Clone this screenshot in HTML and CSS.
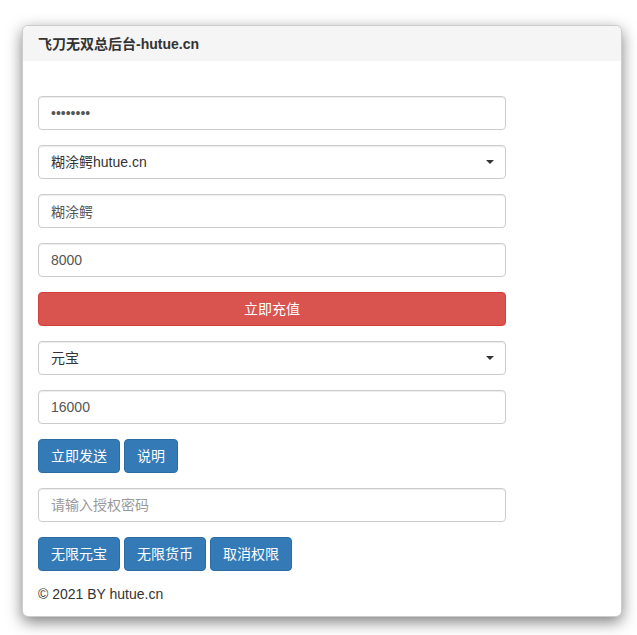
FILE: index.html
```html
<!DOCTYPE html>
<html lang="zh-CN">
<head>
  <meta charset="UTF-8" />
  <meta name="viewport" content="width=device-width, initial-scale=1.0" />
  <title>飞刀无双总后台-hutue.cn</title>
  <link rel="stylesheet" href="styles.css">
</head>
<body>

  <div class="panel">
    <div class="panel-heading">飞刀无双总后台-hutue.cn</div>
    <div class="panel-body">

      <div class="form-group">
        <input type="password" class="form-control" value="12345678" />
      </div>

      <div class="form-group select-wrap">
        <select class="form-control">
          <option>糊涂鳄hutue.cn</option>
        </select>
      </div>

      <div class="form-group">
        <input type="text" class="form-control" value="糊涂鳄" />
      </div>

      <div class="form-group">
        <input type="text" class="form-control" value="8000" />
      </div>

      <div class="form-group">
        <button class="btn btn-danger btn-block">立即充值</button>
      </div>

      <div class="form-group select-wrap">
        <select class="form-control">
          <option>元宝</option>
        </select>
      </div>

      <div class="form-group">
        <input type="text" class="form-control" value="16000" />
      </div>

      <div class="form-group btn-row">
        <button class="btn btn-primary">立即发送</button>
        <button class="btn btn-primary">说明</button>
      </div>

      <div class="form-group">
        <input type="text" class="form-control" placeholder="请输入授权密码" />
      </div>

      <div class="form-group btn-row">
        <button class="btn btn-primary">无限元宝</button>
        <button class="btn btn-primary">无限货币</button>
        <button class="btn btn-primary">取消权限</button>
      </div>

      <p class="footer">© 2021 BY hutue.cn</p>
    </div>
  </div>

</body>
</html>
```

FILE: styles.css
```css
* {
  box-sizing: border-box;
}

body {
  margin: 0;
  padding: 25px 15px 18px 22px;
  font-family: "Liberation Sans", Arial, "Noto Sans CJK SC", sans-serif;
  font-size: 14px;
  line-height: 20px;
  color: #333;
  background: #fff;
}

.panel {
  background: #fff;
  border: 1px solid rgba(0, 0, 0, 0.2);
  border-radius: 6px;
  box-shadow: 0 5px 15px rgba(0, 0, 0, 0.5);
  overflow: hidden;
}

.panel-heading {
  background: #f5f5f5;
  padding: 8px 15px 7px;
  font-weight: bold;
  color: #333;
}

.panel-body {
  padding: 35px 15px 12px;
}

.form-group {
  max-width: 468px;
  margin-bottom: 15px;
}

.form-control {
  display: block;
  width: 100%;
  height: 34px;
  padding: 6px 12px;
  font-family: inherit;
  font-size: 14px;
  line-height: 20px;
  color: #555;
  background: #fff;
  border: 1px solid #ccc;
  border-radius: 4px;
  box-shadow: inset 0 1px 1px rgba(0, 0, 0, 0.075);
  outline: none;
}

.form-control::placeholder {
  color: #999;
}

select.form-control {
  appearance: none;
  -webkit-appearance: none;
  color: #333;
}

.select-wrap {
  position: relative;
}

.select-wrap::after {
  content: "";
  position: absolute;
  right: 12px;
  top: 15px;
  border-left: 4px solid transparent;
  border-right: 4px solid transparent;
  border-top: 4px solid #333;
  pointer-events: none;
}

.btn {
  display: inline-block;
  height: 34px;
  padding: 6px 12px;
  font-family: inherit;
  font-size: 14px;
  line-height: 20px;
  color: #fff;
  border: 1px solid transparent;
  border-radius: 4px;
  cursor: pointer;
}

.btn-block {
  display: block;
  width: 100%;
}

.btn-danger {
  background: #d9534f;
  border-color: #d43f3a;
}

.btn-primary {
  background: #337ab7;
  border-color: #2e6da4;
}

.btn-row {
  display: flex;
  gap: 4px;
}

.footer {
  margin: -2px 0 0;
  color: #333;
}
```
